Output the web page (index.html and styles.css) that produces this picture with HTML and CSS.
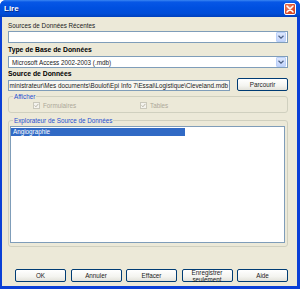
FILE: index.html
```html
<!DOCTYPE html>
<html lang="fr">
<head>
<meta charset="utf-8">
<title>Lire</title>
<link rel="stylesheet" href="styles.css">
</head>
<body>
<div class="window">
  <div class="titlebar">
    <span class="title">Lire</span>
    <span class="close"><svg width="8" height="8" viewBox="0 0 8 8"><path d="M1 1L7 7M7 1L1 7" stroke="#fff" stroke-width="1.6" stroke-linecap="round"/></svg></span>
  </div>
  <div class="content">
    <div class="label">Sources de Données Récentes</div>
    <div class="combo"><span class="combo-text"></span><span class="drop"><svg width="6" height="4" viewBox="0 0 6 4"><path d="M0.5 0.8L3 3.2L5.5 0.8" fill="none" stroke="#4D6185" stroke-width="1.2"/></svg></span></div>
    <div class="label bold gap2">Type de Base de Données</div>
    <div class="combo gap2"><span class="combo-text">Microsoft Access 2002-2003 (.mdb)</span><span class="drop"><svg width="6" height="4" viewBox="0 0 6 4"><path d="M0.5 0.8L3 3.2L5.5 0.8" fill="none" stroke="#4D6185" stroke-width="1.2"/></svg></span></div>
    <div class="label bold gap1">Source de Données</div>
    <div class="source-row">
      <div class="textbox"><span>ministrateur\Mes documents\Boulot\Epi Info 7\Essai\Logistique\Cleveland.mdb</span></div>
      <button class="btn browse">Parcourir</button>
    </div>
    <fieldset class="group show">
      <legend>Afficher</legend>
      <div class="checks">
        <label class="check"><span class="box"><svg width="5" height="5" viewBox="0 0 5 5"><path d="M0.6 2.4L1.9 3.8L4.4 0.9" fill="none" stroke="#B8B5A6" stroke-width="1"/></svg></span>Formulaires</label>
        <label class="check"><span class="box"><svg width="5" height="5" viewBox="0 0 5 5"><path d="M0.6 2.4L1.9 3.8L4.4 0.9" fill="none" stroke="#B8B5A6" stroke-width="1"/></svg></span>Tables</label>
      </div>
    </fieldset>
    <fieldset class="group explorer">
      <legend>Explorateur de Source de Données</legend>
      <div class="listbox">
        <div class="item selected">Angiographie</div>
      </div>
    </fieldset>
    <div class="buttons">
      <button class="btn">OK</button>
      <button class="btn">Annuler</button>
      <button class="btn">Effacer</button>
      <button class="btn two">Enregistrer<br>seulement</button>
      <button class="btn">Aide</button>
    </div>
  </div>
</div>
</body>
</html>
```

FILE: styles.css
```css
* { box-sizing: border-box; margin: 0; padding: 0; }
html, body { width: 300px; height: 289px; overflow: hidden; }
body {
  font-family: "Liberation Sans", Arial, sans-serif;
  font-size: 6.3px;
  color: #1a1a1a;
  background: #ffffff;
}
.window {
  width: 300px;
  height: 289px;
  display: flex;
  flex-direction: column;
  background: #0A3FD6;
  border-radius: 6px 6px 0 0;
  overflow: hidden;
}
.titlebar {
  height: 17px;
  flex: none;
  display: flex;
  align-items: center;
  justify-content: space-between;
  padding: 0 4px 0 4px;
  background: linear-gradient(#3A86F2 0%, #0757E6 12%, #0050E0 45%, #004DD8 80%, #0040BC 100%);
}
.title {
  color: #fff;
  font-weight: bold;
  font-size: 8px;
  text-shadow: 1px 1px 0 #0A2B8A;
}
.close {
  width: 12px;
  height: 12px;
  border: 1px solid #fff;
  border-radius: 2px;
  background: radial-gradient(circle at 35% 35%, #F08A6A 0%, #E0502C 55%, #C23A1C 100%);
  display: flex;
  align-items: center;
  justify-content: center;
}
.content {
  flex: 1;
  margin: 0 3px 3px 2px;
  background: #ECE9D8;
  padding: 4px 9px 0 6px;
  display: flex;
  flex-direction: column;
}
.label { line-height: 9px; height: 9px; white-space: nowrap; }
.bold { font-weight: bold; font-size: 6.8px; color: #000; }
.gap1 { margin-top: 1px; }
.gap2 { margin-top: 2px; }
.combo {
  margin-top: 1px;
  height: 12px;
  border: 1px solid #7F9DB9;
  background: #fff;
  display: flex;
  align-items: center;
  padding: 1px;
}
.combo.gap2 { margin-top: 2px; }
.combo-text { flex: 1; padding-left: 2px; line-height: 9px; white-space: nowrap; }
.drop {
  width: 10px;
  height: 10px;
  border: 1px solid #BAD0F9;
  border-radius: 1px;
  background: linear-gradient(#DCE7FD, #C3D4FB);
  display: flex;
  align-items: center;
  justify-content: center;
}
.source-row {
  height: 13px;
  display: flex;
  align-items: center;
  justify-content: space-between;
}
.textbox {
  width: 222px;
  height: 11px;
  margin-top: 1px;
  border: 1px solid #7F9DB9;
  background: #F8F7F2;
  overflow: hidden;
  white-space: nowrap;
  display: flex;
  align-items: center;
  justify-content: flex-end;
  padding: 0 1px 0 1px;
  line-height: 9px;
}
.btn {
  font: inherit;
  color: #1a1a1a;
  height: 13px;
  width: 51px;
  border: 1px solid #003C74;
  border-radius: 2px;
  background: linear-gradient(#FFFFFF 0%, #F4F4F0 60%, #E3E2DA 100%);
  line-height: 9px;
  text-align: center;
}
.group {
  border: 1px solid #D0D0BF;
  border-radius: 3px;
  padding: 0 0 0 4px;
}
.group legend {
  color: #1E4FD1;
  line-height: 9px;
  padding: 0 1px;
}
.show {
  margin-top: 1px;
  height: 21px;
}
.checks {
  display: flex;
  margin-top: 1px;
  margin-left: 20px;
}
.check {
  width: 107px;
  display: flex;
  align-items: center;
  color: #ACA899;
  line-height: 7px;
}
.box {
  width: 7px;
  height: 7px;
  border: 1px solid #CAC8BB;
  background: #F4F3EE;
  margin-right: 3px;
  display: flex;
  align-items: center;
  justify-content: center;
}
.explorer {
  margin-top: 3px;
  padding: 1px 2px 3px 1px;
}
.explorer legend { margin-left: 3px; }
.listbox {
  height: 117px;
  border: 1px solid #7F9DB9;
  background: #fff;
  padding: 1px 0 0 0;
}
.item {
  width: 174px;
  height: 8px;
  line-height: 8px;
  padding-left: 2px;
  white-space: nowrap;
}
.selected { background: #316AC5; color: #fff; }
.buttons {
  margin-top: 22px;
  padding-left: 7px;
  display: flex;
  justify-content: space-between;
}
.btn.two { line-height: 6.5px; font-size: 6.3px; padding-bottom: 1px; }
```
